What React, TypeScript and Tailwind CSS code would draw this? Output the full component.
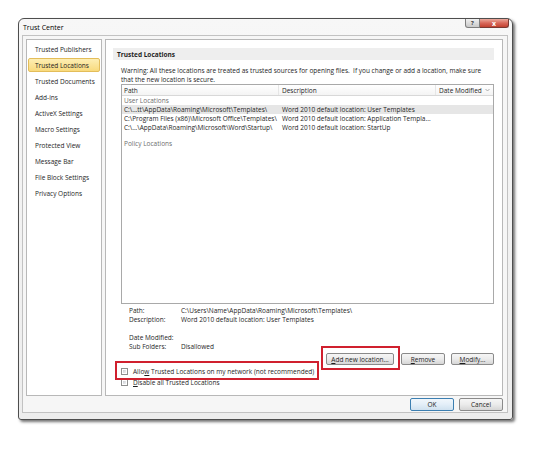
import React from "react";

const navItems = [
  "Trusted Publishers",
  "Trusted Locations",
  "Trusted Documents",
  "Add-ins",
  "ActiveX Settings",
  "Macro Settings",
  "Protected View",
  "Message Bar",
  "File Block Settings",
  "Privacy Options",
];

const rows = [
  {
    path: "C:\\...tt\\AppData\\Roaming\\Microsoft\\Templates\\",
    desc: "Word 2010 default location: User Templates",
    selected: true,
  },
  {
    path: "C:\\Program Files (x86)\\Microsoft Office\\Templates\\",
    desc: "Word 2010 default location: Application Templa...",
    selected: false,
  },
  {
    path: "C:\\...\\AppData\\Roaming\\Microsoft\\Word\\Startup\\",
    desc: "Word 2010 default location: StartUp",
    selected: false,
  },
];

function Btn({
  children,
  w,
  primary,
}: {
  children: React.ReactNode;
  w: string;
  primary?: boolean;
}) {
  return (
    <div
      className={
        "h-full flex items-center justify-center rounded-[2px] border whitespace-nowrap text-[#1e1e1e] " +
        w +
        " " +
        (primary
          ? "border-[#3c7fb1] bg-gradient-to-b from-[#f1f7fc] via-[#e3eef8] to-[#cfe1ef]"
          : "border-[#8a8a8a] bg-gradient-to-b from-[#f6f6f6] via-[#ebebeb] to-[#d6d6d6]")
      }
    >
      {children}
    </div>
  );
}

function CheckBox() {
  return (
    <div className="w-[7px] h-[7px] border border-[#8e8f8f] bg-white p-[1px]">
      <div className="w-full h-full bg-gradient-to-br from-[#cbcfd5] to-[#f1f2f3]" />
    </div>
  );
}

export default function App() {
  return (
    <div className="w-[540px] h-[451px] bg-white pt-[18px] pl-[18px] font-['Open_Sans',sans-serif] text-[#1e1e1e] text-[6.5px] leading-[9px]">
      <div className="w-[495px] h-[402px] flex flex-col rounded-t-[6px] rounded-b-[3px] border border-[#4e4e4e] bg-gradient-to-b from-[#f7f7f7] to-[#ededed] shadow-[2px_2px_3px_rgba(0,0,0,0.55)]">
        {/* Title bar */}
        <div className="h-[16px] flex items-start justify-between pl-[4px] pr-[3px]">
          <div className="self-center text-[7px] text-black whitespace-nowrap">Trust Center</div>
          <div className="flex">
            <div className="w-[15px] h-[9px] flex items-center justify-center rounded-bl-[3px] border border-t-0 border-[#7d7d7d] bg-gradient-to-b from-[#f0f0f0] via-[#dcdcdc] to-[#c9c9c9] text-[6px] leading-none text-[#3a3a3a] font-bold">
              ?
            </div>
            <div className="w-[29px] h-[9px] flex items-center justify-center rounded-br-[3px] border border-t-0 border-l-0 border-[#7a3a33] bg-gradient-to-b from-[#e9a99d] via-[#d9685a] to-[#c2402f] text-[7px] leading-none text-white font-bold">
              x
            </div>
          </div>
        </div>

        {/* Client area */}
        <div className="ml-[3px] mr-[4px] h-[378px] border border-[#c2c2c2] bg-[#f6f6f6] flex flex-col pl-[3px] pr-[4px] pt-[3px]">
          <div className="flex gap-[3px] h-[357px]">
            {/* Nav */}
            <div className="w-[76px] h-full border border-[#b8b8b8] bg-white pt-[2px] px-[1px] flex flex-col gap-[2px]">
              {navItems.map((n) => (
                <div
                  key={n}
                  className={
                    "h-[14px] flex items-center px-[6px] whitespace-nowrap border rounded-[2px] " +
                    (n === "Trusted Locations"
                      ? "border-[#e3bd5a] bg-gradient-to-b from-[#fdeeb3] to-[#f8da7c]"
                      : "border-transparent")
                  }
                >
                  {n}
                </div>
              ))}
            </div>

            {/* Main panel */}
            <div className="relative w-[398px] h-full border border-[#b8b8b8] bg-white pt-[8px] flex flex-col">
              <div className="ml-[7px] mr-[8px] h-[12px] bg-[#eeeeee] flex items-center pl-[4px] font-bold whitespace-nowrap">
                Trusted Locations
              </div>

              <div className="pl-[15px] pr-[8px] flex flex-col">
                <div className="mt-[6px] whitespace-nowrap">
                  Warning: All these locations are treated as trusted sources for opening files.&nbsp; If you change or add a location, make sure
                  <br />
                  that the new location is secure.
                </div>

                {/* Table */}
                <div className="h-[220px] border border-[#a9a9a9] bg-white flex flex-col">
                  <div className="h-[11px] flex border-b border-[#d8d8d8] bg-gradient-to-b from-white to-[#f4f4f4]">
                    <div className="w-[157px] flex items-center pl-[2px] border-r border-[#e6e6e6]">Path</div>
                    <div className="w-[157px] flex items-center pl-[3px] border-r border-[#e6e6e6]">Description</div>
                    <div className="flex-1 flex items-center pl-[3px] whitespace-nowrap">
                      Date Modified
                      <svg className="ml-[3px]" width="5" height="4" viewBox="0 0 5 4">
                        <path d="M0.5 1 L2.5 3 L4.5 1" fill="none" stroke="#9a9a9a" strokeWidth="0.8" />
                      </svg>
                    </div>
                  </div>
                  <div className="h-[9px] pl-[2px] text-[#6e6e6e] flex items-center whitespace-nowrap">User Locations</div>
                  {rows.map((r) => (
                    <div
                      key={r.path}
                      className={"h-[9px] flex items-center whitespace-nowrap " + (r.selected ? "bg-[#e6e6e6]" : "")}
                    >
                      <div className="w-[157px] pl-[2px] overflow-hidden">{r.path}</div>
                      <div className="pl-[3px]">{r.desc}</div>
                    </div>
                  ))}
                  <div className="mt-[7px] h-[9px] pl-[2px] text-[#6e6e6e] flex items-center whitespace-nowrap">Policy Locations</div>
                </div>

                {/* Details */}
                <div className="mt-[2px] pl-[8px] grid grid-cols-[52px_1fr] whitespace-nowrap">
                  <div>Path:</div>
                  <div>C:\Users\Name\AppData\Roaming\Microsoft\Templates\</div>
                  <div>Description:</div>
                  <div>Word 2010 default location: User Templates</div>
                  <div className="h-[9px]" />
                  <div className="h-[9px]" />
                  <div>Date Modified:</div>
                  <div />
                  <div>Sub Folders:</div>
                  <div>Disallowed</div>
                </div>

                {/* Action buttons */}
                <div className="mt-[2px] h-[12px] flex justify-end">
                  <Btn w="w-[68px]">
                    <span><u>A</u>dd new location...</span>
                  </Btn>
                  <div className="w-[7px]" />
                  <Btn w="w-[44px]">
                    <span><u>R</u>emove</span>
                  </Btn>
                  <div className="w-[6px]" />
                  <Btn w="w-[43px]">
                    <span><u>M</u>odify...</span>
                  </Btn>
                </div>

                {/* Checkboxes */}
                <div className="mt-[1px] h-[11px] flex items-center gap-[5px] whitespace-nowrap">
                  <CheckBox />
                  <span>
                    Allo<u>w</u> Trusted Locations on my network (not recommended)
                  </span>
                </div>
                <div className="h-[11px] flex items-center gap-[5px] whitespace-nowrap">
                  <CheckBox />
                  <span>
                    <u>D</u>isable all Trusted Locations
                  </span>
                </div>
              </div>

              {/* Red annotation boxes */}
              <div className="absolute left-[215px] top-[306px] w-[79px] h-[24px] border-2 border-[#d0202e] pointer-events-none" />
              <div className="absolute left-[9px] top-[321px] w-[204px] h-[19px] border-2 border-[#d0202e] pointer-events-none" />
            </div>
          </div>

          {/* OK / Cancel */}
          <div className="mt-[2px] h-[13px] flex justify-end gap-[5px]">
            <Btn w="w-[44px]" primary>
              OK
            </Btn>
            <Btn w="w-[44px]">Cancel</Btn>
          </div>
        </div>
      </div>
    </div>
  );
}
